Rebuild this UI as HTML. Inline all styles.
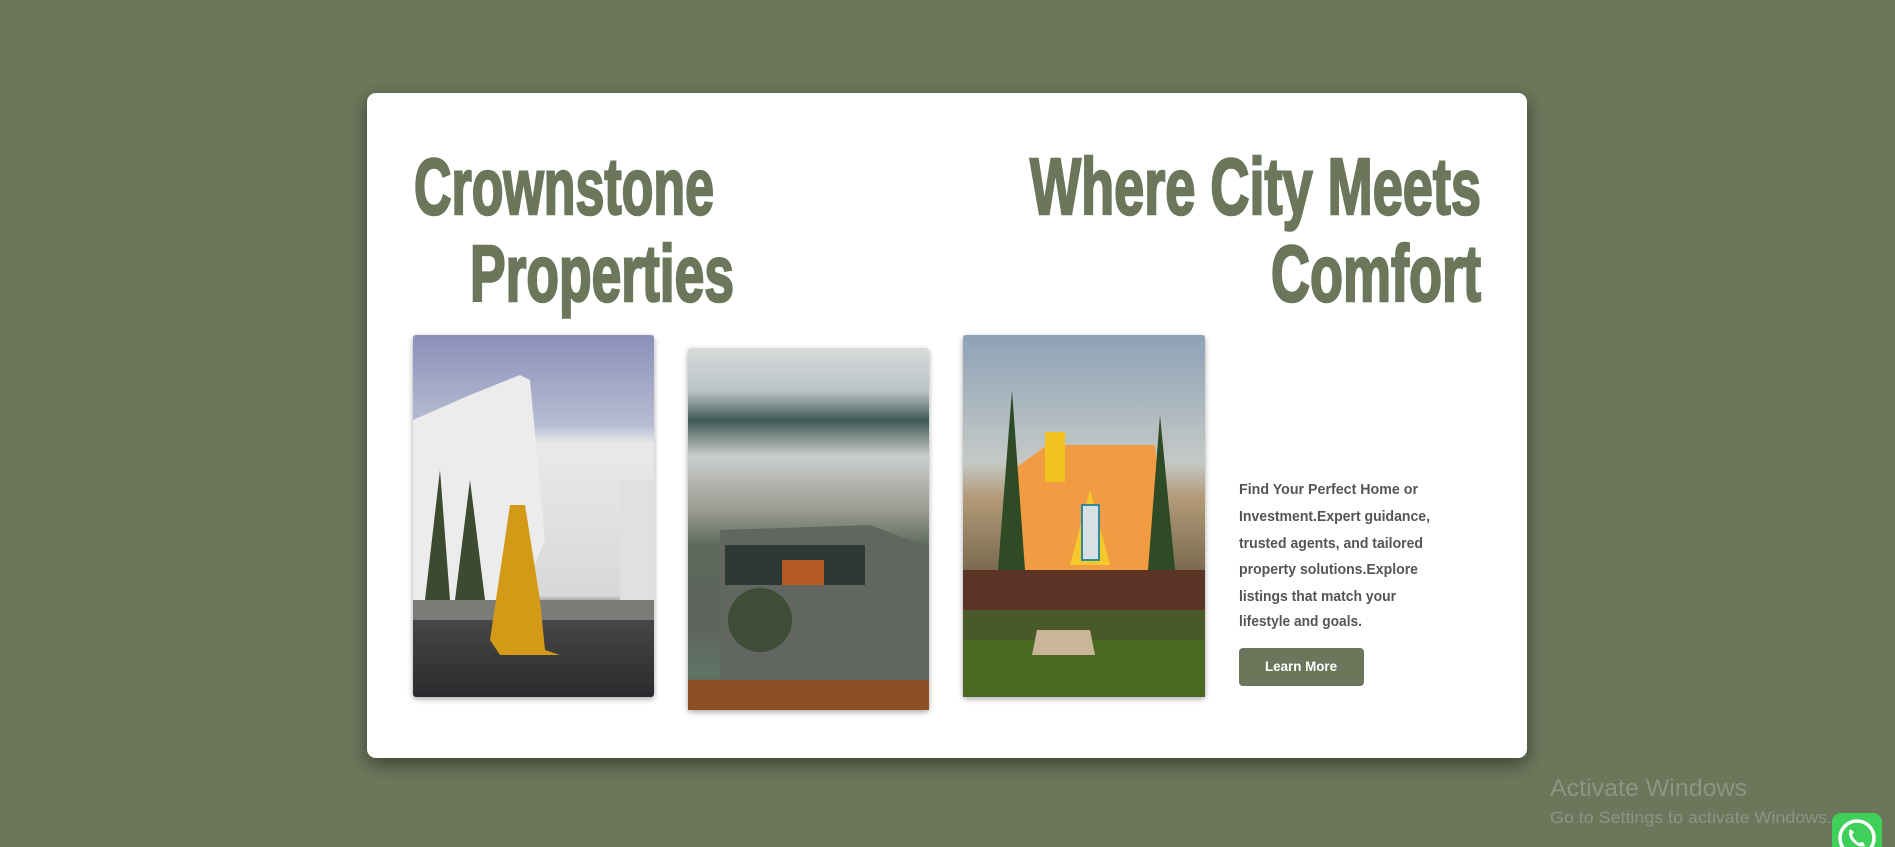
<!DOCTYPE html>
<html><head><meta charset="utf-8"><style>
html,body{margin:0;padding:0;width:1895px;height:847px;overflow:hidden;background:#6b765a;}
svg{display:block}
</style></head><body>
<svg width="1895" height="847" viewBox="0 0 1895 847" xmlns="http://www.w3.org/2000/svg">
<defs>
<filter id="sh" x="-10%" y="-10%" width="120%" height="125%"><feDropShadow dx="0" dy="6" stdDeviation="9" flood-color="#000" flood-opacity="0.45"/></filter>
<filter id="sh2" x="-10%" y="-10%" width="120%" height="120%"><feDropShadow dx="0" dy="2" stdDeviation="3" flood-color="#000" flood-opacity="0.35"/></filter>
<linearGradient id="g1" x1="0" y1="0" x2="0" y2="1">
<stop offset="0" stop-color="#8a90b9"/><stop offset="0.25" stop-color="#b7bdd2"/><stop offset="0.3" stop-color="#e9e9ea"/><stop offset="0.72" stop-color="#d8d8d6"/><stop offset="0.76" stop-color="#4a4a4c"/><stop offset="1" stop-color="#2b2b2e"/></linearGradient>
<linearGradient id="g2" x1="0" y1="0" x2="0" y2="1">
<stop offset="0" stop-color="#d6dadb"/><stop offset="0.12" stop-color="#b9c2c3"/><stop offset="0.2" stop-color="#3f5a55"/><stop offset="0.3" stop-color="#c9cecd"/><stop offset="0.45" stop-color="#9b9a90"/><stop offset="0.55" stop-color="#5b6a5a"/><stop offset="0.75" stop-color="#5e625c"/><stop offset="0.9" stop-color="#5f7466"/><stop offset="1" stop-color="#8a4a20"/></linearGradient>
<linearGradient id="g3" x1="0" y1="0" x2="0" y2="1">
<stop offset="0" stop-color="#8ea2b6"/><stop offset="0.35" stop-color="#c4c9c6"/><stop offset="0.45" stop-color="#b39a78"/><stop offset="0.65" stop-color="#7a6a50"/><stop offset="0.75" stop-color="#4c5a2c"/><stop offset="1" stop-color="#3e5a22"/></linearGradient>
</defs>
<rect width="1895" height="847" fill="#6b765a"/>
<rect x="367" y="93" width="1160" height="665" rx="9" fill="#fff" filter="url(#sh)"/>
<g fill="#6b765a" stroke="#6b765a" stroke-width="2.5" font-family="Liberation Sans, sans-serif" font-weight="bold" font-size="80">
<text x="414" y="214" textLength="300" lengthAdjust="spacingAndGlyphs">Crownstone</text>
<text x="470" y="301" textLength="264" lengthAdjust="spacingAndGlyphs">Properties</text>
<text x="1030" y="214" textLength="451" lengthAdjust="spacingAndGlyphs">Where City Meets</text>
<text x="1271" y="301" textLength="210" lengthAdjust="spacingAndGlyphs">Comfort</text>
</g>
<g filter="url(#sh2)">
<rect x="413" y="335" width="241" height="362" rx="3" fill="url(#g1)"/>
<rect x="688" y="348" width="241" height="362" rx="3" fill="url(#g2)"/>
<rect x="963" y="335" width="242" height="362" rx="3" fill="url(#g3)"/>
</g>
<polygon points="413,420 470,395 520,375 530,380 545,540 520,600 413,605" fill="#ececec"/>
<rect x="413" y="600" width="241" height="20" fill="#7b7b78"/>
<path d="M425 600 L440 470 L450 600 Z M455 600 L470 480 L485 600Z" fill="#3c4a30"/>
<path d="M510 505 L525 505 L540 600 L545 650 L560 655 L500 655 L490 640 Z" fill="#d39a18"/>
<rect x="620" y="480" width="34" height="120" fill="#e0e0de"/>
<polygon points="720,530 870,525 910,540 929,545 929,700 720,700" fill="#626660"/>
<rect x="725" y="545" width="140" height="40" fill="#2d3a34"/>
<rect x="782" y="560" width="42" height="25" fill="#b55a22"/>
<circle cx="760" cy="620" r="32" fill="#3d4d36"/>
<rect x="688" y="680" width="241" height="30" fill="#8f4f25"/>
<polygon points="1013,470 1047,445 1155,445 1168,570 1013,570" fill="#f19c42"/>
<rect x="1045" y="432" width="20" height="50" fill="#f2c21e"/>
<polygon points="1090,490 1070,565 1110,565" fill="#f6c92a"/>
<rect x="1082" y="505" width="17" height="55" fill="#d8e0e4" stroke="#2f8ca0" stroke-width="2"/>
<path d="M998 570 L1012 390 L1025 570Z M1148 570 L1160 415 L1175 570Z" fill="#2e4b25"/>
<rect x="963" y="570" width="242" height="40" fill="#5b3426"/>
<rect x="963" y="640" width="242" height="57" fill="#4a6a22"/>
<polygon points="1037,630 1090,630 1095,655 1032,655" fill="#c9b597"/>
<g fill="#555" font-family="Liberation Sans, sans-serif" font-weight="bold" font-size="14.5">
<text x="1239" y="494" textLength="179" lengthAdjust="spacingAndGlyphs">Find Your Perfect Home or</text>
<text x="1239" y="521" textLength="191" lengthAdjust="spacingAndGlyphs">Investment.Expert guidance,</text>
<text x="1239" y="548" textLength="184" lengthAdjust="spacingAndGlyphs">trusted agents, and tailored</text>
<text x="1239" y="574" textLength="179" lengthAdjust="spacingAndGlyphs">property solutions.Explore</text>
<text x="1239" y="601" textLength="157" lengthAdjust="spacingAndGlyphs">listings that match your</text>
<text x="1239" y="626" textLength="123" lengthAdjust="spacingAndGlyphs">lifestyle and goals.</text>
</g>
<rect x="1239" y="648" width="125" height="38" rx="4" fill="#6b765a"/>
<text x="1265" y="671" textLength="72" lengthAdjust="spacingAndGlyphs" fill="#fff" font-family="Liberation Sans, sans-serif" font-weight="bold" font-size="14">Learn More</text>
<g fill="#8d957f" font-family="Liberation Sans, sans-serif">
<text x="1550" y="796" font-size="24" textLength="197" lengthAdjust="spacingAndGlyphs">Activate Windows</text>
<text x="1550" y="823" font-size="17" textLength="282" lengthAdjust="spacingAndGlyphs">Go to Settings to activate Windows.</text>
</g>
<rect x="1832" y="813" width="50" height="50" rx="9" fill="#3fd05a"/>
<circle cx="1857" cy="838" r="17" fill="none" stroke="#fff" stroke-width="3.5"/>
<path d="M1850 829 q-3 6 3 13 q6 6 12 4 l-2 -4 l-4 1 q-5 -3 -7 -8 l2 -3 z" fill="#fff"/>
</svg>
</body></html>
